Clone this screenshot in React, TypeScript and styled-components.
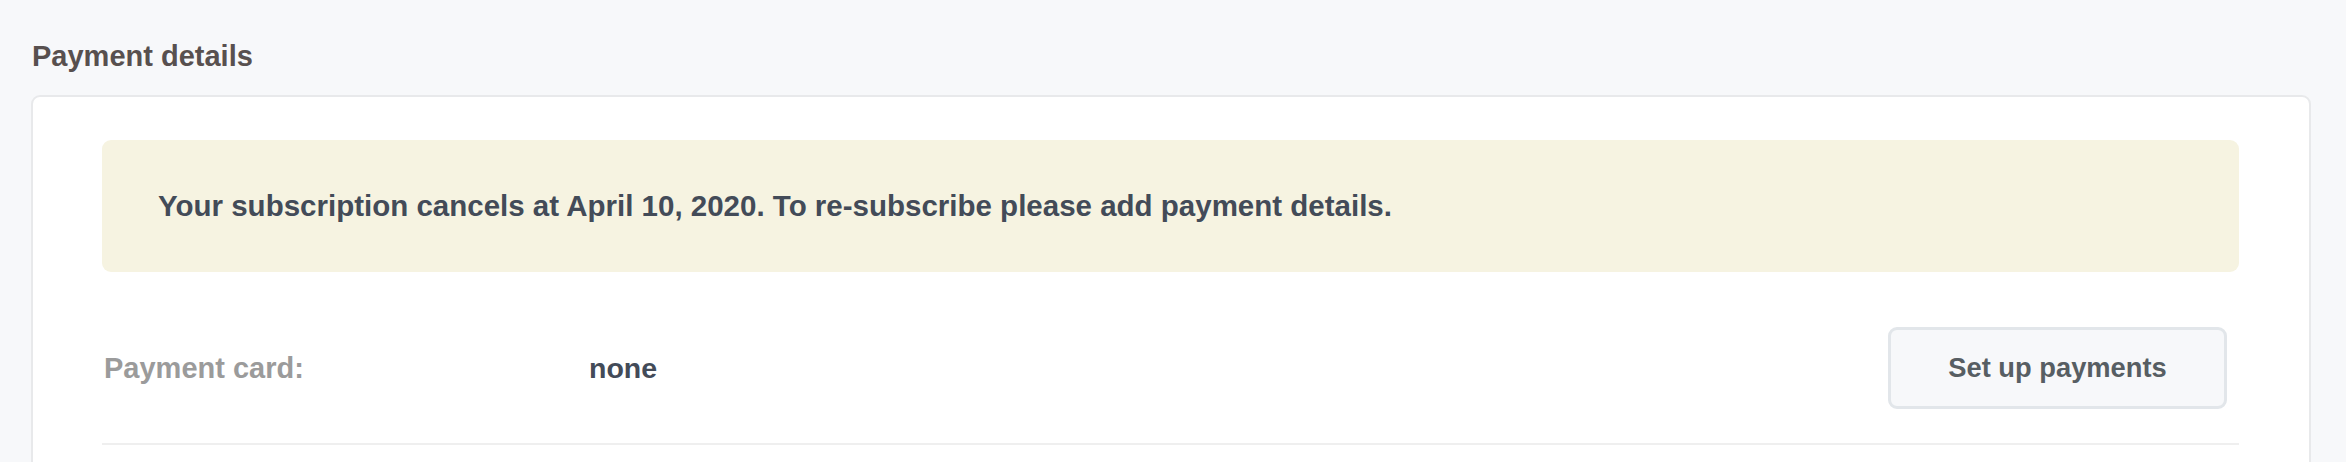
import React from 'react'
import styled, { createGlobalStyle } from 'styled-components'

const GlobalStyle = createGlobalStyle`
  html, body {
    margin: 0;
    padding: 0;
    background: #f7f8fa;
  }
  body {
    font-family: "Liberation Sans", Arial, sans-serif;
    -webkit-font-smoothing: antialiased;
  }
`

export default () => (
  <>
    <GlobalStyle />
    <Page>
      <SectionTitle>Payment details</SectionTitle>
      <Card>
        <Notice>
          Your subscription cancels at April 10, 2020. To re-subscribe please add payment details.
        </Notice>
        <DetailRow>
          <DetailLabel>Payment card:</DetailLabel>
          <DetailValue>none</DetailValue>
          <SecondaryButton type="button">Set up payments</SecondaryButton>
        </DetailRow>
        <Spacer />
      </Card>
    </Page>
  </>
)

const Page = styled.div`
  padding: 36px 35px 0 31px;
`

const SectionTitle = styled.h2`
  margin: 0 0 19px 1px;
  font-size: 29px;
  line-height: 40px;
  font-weight: 700;
  color: #58504f;
`

const Card = styled.section`
  background: #fff;
  border: 2px solid #e8e9eb;
  border-radius: 9px;
  padding: 43px 70px 0 69px;
`

const Notice = styled.div`
  background: #f6f3e1;
  border-radius: 9px;
  padding: 46px 56px;
  font-size: 29.5px;
  line-height: 40px;
  font-weight: 700;
  color: #434b58;
`

const DetailRow = styled.div`
  display: flex;
  align-items: center;
  margin-top: 55px;
  padding: 0 12px 34px 2px;
  border-bottom: 2px solid #efefef;
`

const DetailLabel = styled.div`
  width: 485px;
  font-size: 29px;
  font-weight: 700;
  color: #9b9b9b;
`

const DetailValue = styled.div`
  flex: 1;
  font-size: 28.5px;
  font-weight: 700;
  color: #434b58;
`

const SecondaryButton = styled.button`
  width: 339px;
  height: 82px;
  background: #f7f8fa;
  border: 3px solid #e2e6ea;
  border-radius: 9px;
  font-family: inherit;
  font-size: 27.3px;
  font-weight: 700;
  color: #575e63;
  cursor: pointer;
`

const Spacer = styled.div`
  height: 60px;
`
